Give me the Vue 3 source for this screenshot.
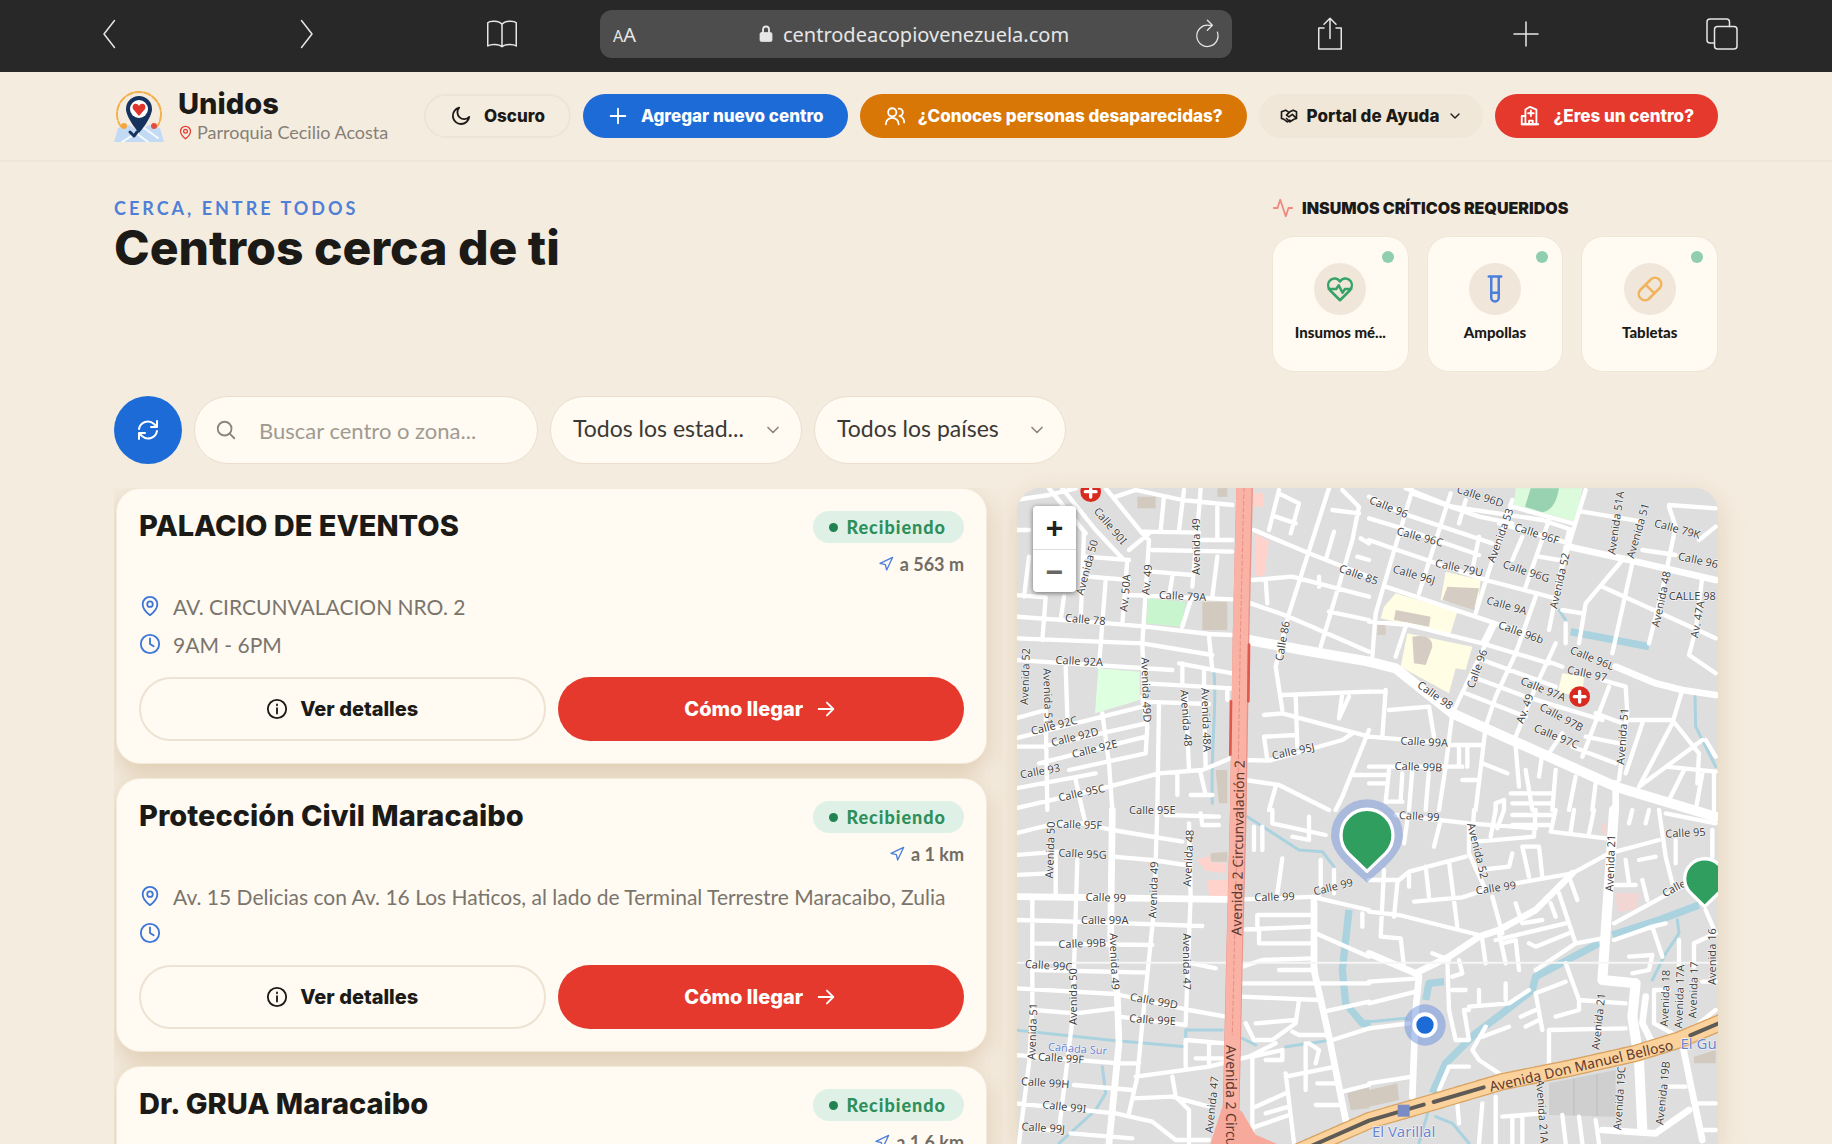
<script setup>
import { ref } from 'vue'

const icons = {
  back: '<path d="M15 3 8 12l7 9"/>',
  forward: '<path d="m9 3 7 9-7 9"/>',
  book: '<path d="M12 5.500C10 3 4 3 2.500 4.500V20c2-1.500 7.500-1.500 9.500.5 2-2 7.500-2 9.500-.5V4.500C20 3 14 3 12 5.500v15"/>',
  lock: '<rect x="4" y="10" width="16" height="12" rx="2" fill="currentColor"/><path d="M8 10V6a4 4 0 0 1 8 0v4" stroke-width="2.500"/>',
  reload: '<path d="M19.500 10.500A8.500 8.500 0 1 1 12 5h3M11.500 1 15.500 5l-4 4"/>',
  share: '<path d="M8 8H4.500v14h15V8H16M12 15V1.500M8 5.500l4-4 4 4"/>',
  plus: '<path d="M12 4v16M4 12h16"/>',
  tabs: '<rect x="7" y="7" width="15" height="15" rx="2"/><path d="M7 18H4a2 2 0 0 1-2-2V4a2 2 0 0 1 2-2h11a2 2 0 0 1 2 2v3"/>',
  moon: '<path d="M10 3a7 7 0 0 0 11 10A9 9 0 1 1 10 3z"/>',
  users: '<circle cx="9" cy="8" r="4.500"/><path d="M2 21a7 7 0 0 1 14 0M16 4a4 4 0 0 1 1 8c3 1 5 3 5 7"/>',
  hands: '<path d="M11 7 8 5 3 7v8l3 1 4 3 3-2M13 7l4-2 4 2v8l-3 1-5 3-4-4M13 7l-4 4 3 2 4-3 4 4"/>',
  chevron: '<path d="m6 9 6 6 6-6"/>',
  hospital: '<path d="M7 21H3v-9h4M7 21V5l5-3 7 3v16zM11 21v-4h4v4M13 6v6M10 9h6"/><path d="M3 21h18"/>',
  pulse: '<path d="M2 12h4l3-9 6 18 3-9h4"/>',
  heart: '<path d="M12 21 4 13C-1 6 8 0 12 6c4-6 13 0 8 7zM3 12h6l2-3 3 6 2-3h5"/>',
  tube: '<path d="M7 2h10M9 2v17a3 3 0 0 0 6 0V2M9 15h6v4a3 3 0 0 1-6 0z"/>',
  pill: '<path d="m11 20 9-9a5 5 0 0 0-7-7l-9 9a5 5 0 0 0 7 7zM8.500 8.500l7 7"/>',
  refresh: '<path d="M3 11a9 9 0 0 1 15-5l3 3M21 3v6h-6M21 13a9 9 0 0 1-15 5l-3-3M3 21v-6h6"/>',
  search: '<circle cx="10.500" cy="10.500" r="7.500"/><path d="m16 16 5 5"/>',
  pin: '<path d="M12 22s-8-6-8-12a8 8 0 0 1 16 0c0 6-8 12-8 12z"/><circle cx="12" cy="10" r="3"/>',
  clock: '<circle cx="12" cy="12" r="10"/><path d="M12 6v6l4 2.500"/>',
  info: '<circle cx="12" cy="12" r="10"/><path d="M12 11v6M12 7v1"/>',
  arrow: '<path d="M4 12h16M13 5l7 7-7 7"/>',
  nav: '<path d="m3 11 19-9-9 19-2-8z"/>',
}

const search = ref('')
const state = ref('all')
const country = ref('all')

const supplies = [
  { name: 'Insumos mé...', icon: 'heart', tone: 'green' },
  { name: 'Ampollas', icon: 'tube', tone: 'blue' },
  { name: 'Tabletas', icon: 'pill', tone: 'amber' },
]

const centers = [
  { name: 'PALACIO DE EVENTOS', distance: 'a 563 m', address: 'AV. CIRCUNVALACION NRO. 2', hours: '9AM - 6PM' },
  { name: 'Protección Civil Maracaibo', distance: 'a 1 km', address: 'Av. 15 Delicias con Av. 16 Los Haticos, al lado de Terminal Terrestre Maracaibo, Zulia', hours: '' },
  { name: 'Dr. GRUA Maracaibo', distance: 'a 1.6 km', address: '', hours: '' },
]

// The map is drawn in four tiles; every coordinate is local to its tile.
const tiles = [
  {
    x: -24, y: -24,
    areas: [
      { c: '#c8f5cd', d: 'M418 355 530 365 518 440 410 430z' },
      { c: '#deffe0', d: 'M268 565 392 575V660L258 700z' },
      { c: '#d2c9bf', d: 'M580 365H655V450H580zM385 50H440V85H385zM625 25H655V50H625zM620 870H655V970H630z' },
      { c: '#ffd3cc', d: 'M740 160 780 185 765 290 738 285zM735 40H765V80H735z' },
    ],
    minor: 'M20 60 120 45 200 25M20 345 110 352 100 480M20 410 300 430 410 440 600 462 670 465M20 475 400 490 610 525M290 300 270 560M20 540 490 570M170 560 175 710M160 25 260 150 340 235M290 25 400 160 420 180 400 490 405 640M120 25 230 160M320 50 380 30 520 60 670 75M465 50 455 150M525 30 510 150M575 25 565 150 550 320M400 155 570 158M430 210 670 215M570 180H670M430 275 550 285M625 80V180M625 230 610 350M360 345 670 358M355 240 340 430M240 290 360 300M230 230 360 240M360 210 420 160M225 160 215 420M165 350 155 420M60 230 45 350M20 150H60M600 470 610 570M545 360 520 440M490 290 480 350M510 550 670 580M520 550V610M585 570V620M410 610 670 625M20 715 110 690M20 775 400 680M20 800H100L410 730M90 850 410 770M20 925 260 880M20 985 300 920 450 880 580 870 665 835M400 650 415 740 410 820 180 870M110 690 115 990M280 700 300 850 310 990M450 670 445 990M530 640 540 870M585 640 590 860M400 665 600 672M505 880V945M575 880 590 945M545 945H610M200 900 220 990M735 150 900 220 1080 290M810 30 780 150M810 40 870 70 845 160M800 110 860 130M960 25 840 400 800 560 820 690M730 300 850 290 1080 350M770 300 775 370M725 370 840 410 1080 515M1000 30 1050 80 1030 180 935 500M970 90 1050 100M975 155 950 240M930 290V320M1045 230 1080 240M1055 175 1080 190M960 395 1080 420M820 645 1080 635M765 705 820 700 1080 770M860 650 865 800M860 765 765 770 775 840M705 840 780 842 1000 780 1030 760M1000 640 990 715 1020 650M1080 750 1000 950 980 990M710 900 810 915 960 990M800 920 780 990M1030 885H1080M655 630V660',
    major: 'M720 480 880 510 1080 545',
    water: 'M615 580C625 680 605 780 610 970',
    river: '',
    labels: [
      [295, 145, 50, 'Calle 90I'], [245, 265, -75, 'Avenida 50'], [228, 430, 5, 'Calle 78'], [210, 555, 3, 'Calle 92A'],
      [572, 200, -90, 'Avenida 49'], [360, 340, -85, 'Av. 50A'], [425, 300, -85, 'Av. 49'], [520, 360, 3, 'Calle 79A'],
      [60, 590, -88, 'Avenida 52'], [105, 650, 88, 'Avenida 51'], [400, 630, 88, 'Avenida 49D'], [520, 715, 86, 'Avenida 48'],
      [580, 720, 88, 'Avenida 48A'], [138, 748, -14, 'Calle 92C'], [200, 782, -14, 'Calle 92D'], [260, 818, -14, 'Calle 92E'],
      [95, 885, -10, 'Calle 93'], [220, 950, -12, 'Calle 95C'], [832, 485, -80, 'Calle 86'], [855, 825, -12, 'Calle 95J'],
      [1045, 295, 20, 'Calle 85'],
    ],
  },
  {
    x: 1056, y: -24,
    areas: [
      { c: '#dcfbdc', d: 'M440 25H640L620 125 435 75z' },
      { c: '#98d2b0', d: 'M485 25H570Q560 90 520 97L468 80z' },
      { c: '#fffde3', d: 'M230 275 335 300 325 385 215 360zM80 340 265 395 245 460 180 450 35 415 45 380zM115 460 310 500 290 570 260 565 240 640 95 560zM580 580 645 590 640 645 565 640z' },
      { c: '#d5ccc3', d: 'M235 320 330 325 315 390 220 360zM80 390 185 410 180 440 75 420zM130 470Q190 460 190 500L170 555 135 550zM25 435H50V465H25z' },
    ],
    minor: 'M110 25 250 80M130 40 330 110 430 130M250 80 520 120 610 150M430 80 610 130M0 50 100 100 370 190M0 115 100 145 330 225M0 180 70 205 350 300 560 355M50 320 200 370 380 430 480 460M390 130 600 190M0 425 120 435 340 490 540 550M340 540 560 620M310 590 470 650 700 720M290 640 470 710M370 430 340 490M130 30 70 230 20 400 10 530M245 40 150 340M290 60 270 130M330 170 310 270M430 60 370 240 320 400M460 170 430 240M540 120 470 320M600 150 560 350 540 450M650 30 610 160 580 260M500 350 440 520 380 650 350 740M380 430 250 700M560 490 500 620 440 770M110 440 80 530M510 230 570 240M640 95 820 125M760 240 650 370 630 490M790 250 730 520M700 320 1040 475M900 75 1040 85M900 80 920 140 880 330 840 490M820 210 920 225M1000 290 980 450 960 525 1040 580M990 180 1040 140M580 390 640 400M590 430V490M540 545 580 560M940 630 910 730 810 920M770 720H910L990 820 985 910M700 600 770 620 775 700 750 900M820 730 770 880M720 620 640 830M680 700 760 730M650 770 750 790M610 800 740 850M580 760 540 820M1000 780 810 920M1010 780 1040 830M890 860 1040 875M945 870 900 960M1000 880 980 990M1035 880V990M0 635H45M50 630 40 770M60 690 180 680 195 770M0 770 240 790M250 700 230 860 210 990M240 795H340M350 740 320 990M340 850 415 880M280 900H330M270 800V860M295 800V860M0 860H280M0 885H50M0 910H50M60 870 50 965H100M130 870 120 990M180 870 170 990M100 880 95 960M440 800 450 920M470 870 490 990M520 820 510 890M425 940H550M430 970H550M560 870 550 990M620 890 600 990M680 910 670 990M380 990V970L405 960V990',
    major: 'M0 545 80 565 250 700 450 790 740 920 1040 1010',
    mid: 'M600 200 780 240 1040 300M740 560 860 610 940 630 1040 645M740 910V990',
    water: 'M570 390 590 420M978 645 980 740 1040 860',
    river: 'M605 455 840 500',
    labels: [
      [55, 92, 22, 'Calle 96'], [150, 182, 15, 'Calle 96C'], [330, 60, 18, 'Calle 96D'], [268, 275, 12, 'Calle 79U'],
      [132, 295, 16, 'Calle 96J'], [500, 172, 18, 'Calle 96F'], [405, 170, -70, 'Avenida 53'], [468, 285, 18, 'Calle 96G'],
      [410, 388, 16, 'Calle 9A'], [452, 468, 20, 'Calle 96b'], [583, 305, -77, 'Avenida 52'], [752, 130, -82, 'Avenida 51A'],
      [818, 155, -74, 'Avenida 51'], [922, 158, 15, 'Calle 79K'], [985, 252, 12, 'Calle 96'], [970, 360, 0, 'CALLE 98'],
      [888, 360, -78, 'Avenida 48'], [997, 420, -80, 'Av. 47A'], [665, 545, 22, 'Calle 96L'], [652, 592, 12, 'Calle 97'],
      [335, 570, -70, 'Calle 96'], [192, 655, 35, 'Calle 98'], [518, 638, 22, 'Calle 97A'], [572, 722, 28, 'Calle 97B'],
      [558, 780, 22, 'Calle 97C'], [478, 690, -70, 'Av. 49'], [165, 797, 3, 'Calle 99A'], [148, 872, 2, 'Calle 99B'],
      [772, 770, -86, 'Avenida 51'],
    ],
  },
  {
    x: -24, y: 966,
    areas: [
      { c: '#d2c9bf', d: 'M605 130 655 125V155H605zM1015 850 1080 830V895L1025 900z' },
      { c: '#ffd3cc', d: 'M565 150 600 138 610 158H650V190L590 182zM595 210H655V260H600z' },
    ],
    minor: 'M20 70 120 45 220 40 310 60 520 95M220 0 230 40M20 135 150 125M20 195 120 190M140 130V250M205 150 190 630 150 960M445 0 435 300 400 640 385 800 360 910M310 140 430 150 530 165M540 40 545 260 530 640M20 330 200 335 580 348M70 270V600L60 760 30 1000M75 400 430 405M80 480 415 488M20 535 320 552 540 600 650 620M75 600 200 610 320 595M330 620 530 645M20 735 330 760H390M380 800 600 770 720 740 800 700M195 825 370 840M370 865 490 860 600 890M490 800 500 860 540 900V1000M20 880 320 910 430 935 500 990H600M90 960H150M185 970 370 985M650 700 530 690V770M600 700V760M560 745H640M470 15 630 20M575 10 580 45H630M550 460 620 475M700 268 930 260M820 145 805 250M935 150V230M975 180V250M790 0V40L950 75M850 80 900 90V20M930 265 1080 300M910 315H745V350M710 358 910 350M750 360V400H910M920 370 1080 440M700 470 760 450 910 445M810 480H920M700 520H1080M700 560 930 570M945 605 1080 575M870 570 860 640 790 690H735L710 640M740 640 860 630M850 665 870 675H950M970 690 1080 655M730 980V740L820 720V750H770M890 700V840M830 800 980 770M830 790 855 1000M740 890 830 850M770 910 840 890M740 950 840 915M920 885H990M1000 845 1080 825M925 820H980M1060 310V350M735 50V120M760 50V120M900 700 930 720 920 760',
    mid: 'M310 0 305 380 325 560 330 700 300 1000M20 260 650 268M915 270V480L960 680 1010 930',
    major: '',
    water: 'M715 20 870 120 940 125 975 170M20 660 300 690 530 710V660H640M700 685 740 705M830 710 970 690M280 770 290 850 260 900 150 1000',
    river: 'M1020 300 1000 480 1010 580 1060 640H1085',
    labels: [
      [210, 55, 2, 'Calle 95F'], [430, 12, 0, 'Calle 95E'], [220, 143, 3, 'Calle 95G'], [290, 274, 2, 'Calle 99'],
      [135, 120, -88, 'Avenida 50'], [445, 240, -88, 'Avenida 49'], [550, 145, -87, 'Avenida 48'], [287, 343, 0, 'Calle 99A'],
      [220, 412, -2, 'Calle 99B'], [118, 478, 4, 'Calle 99C'], [305, 455, 88, 'Avenida 49'], [522, 455, 90, 'Avenida 47'],
      [205, 560, -90, 'Avenida 50'], [433, 584, 10, 'Calle 99D'], [430, 641, 4, 'Calle 99E'], [82, 665, -88, 'Avenida 51'],
      [155, 756, 4, 'Calle 99F'], [108, 830, 4, 'Calle 99H'], [165, 902, 6, 'Calle 99I'], [102, 965, 4, 'Calle 99J'],
      [620, 885, -84, 'Avenida 47'], [797, 272, -2, 'Calle 99'], [975, 242, -14, 'Calle 99'],
    ],
  },
  {
    x: 1056, y: 966,
    areas: [
      { c: '#cfcfcf', d: 'M540 820 740 780V920L540 915z' },
      { c: '#c4c4c4', d: 'M612 806H617V916H612zM682 792H687V918H682z' },
      { c: '#f2d6d3', d: 'M740 250H812L800 300 745 305zM697 40H712V75H697z' },
      { c: '#d2c9bf', d: 'M0 840 85 820 90 870 0 890zM975 740 1040 720V760H975z' },
    ],
    minor: 'M80 15 300 40 500 55M115 30 105 100M215 30 195 110M315 0 310 90M380 0 365 80M405 0 385 55M500 0 495 80 320 95M430 15H550M430 45H540M560 0 545 65 710 85M615 0 605 65M675 0 660 70M0 210H90L120 185 290 140M45 180 35 380 95 385 105 470M85 220 75 320M120 190V230M170 170 180 260M240 155 265 350M135 275 280 262 350 240M300 40V130L350 240M440 220 610 190 720 130 870 90M0 305 90 315 330 375M340 390 350 460M370 260 400 370M390 370 410 460M440 280 460 340 520 330M570 250 620 400 500 480M600 200 625 270M545 280 560 320M380 390 590 340M400 400 440 390 450 480M480 400 500 410 600 370M480 200 460 110H510L520 200M330 180 420 170 430 130M190 430 240 450M270 450 280 490 250 500M300 590 420 580 480 540M235 450 240 600 260 690H300L285 600H300M250 540H290M330 540V580M410 520V570M0 515 150 505M0 580 140 545M0 655 120 640M0 820 130 800M620 400 700 385M735 390 850 350 890 340M735 340 900 250 940 230M850 350 880 440M770 150 780 220M740 225H800M820 210 835 270M810 150 860 140M870 0 890 140 910 220M780 40 790 0M830 40 840 0M890 10 1040 40M920 90V160M1030 60V140M590 460 630 570 770 580M500 550 590 515M500 550 520 660M455 620 500 600M470 650 510 630M540 770V660L770 655M630 570V600L560 620M350 650 310 720 330 750 390 790M340 680 420 650M210 840 240 770H300M855 640V540H900M855 640 910 670M930 390V470M1010 300 1040 370 975 400V470M780 440 850 435 840 480 790 490M1000 515H1040M990 640 1040 600M900 830H950M980 880H1040M340 880 330 1000M380 860V1000M400 920 520 910M430 920V1000M460 920V1000M580 915 590 1000M630 920 640 1000M680 930 690 1000M265 880 270 940M1000 960H1040',
    mid: 'M610 190 500 300 390 360 330 380 240 440 140 490 0 430M150 500 140 600 130 860M830 560 820 640 850 700M700 960 860 970 960 900M940 700 960 800 1000 990',
    major: 'M735 0 700 510 800 520 790 620 810 750 820 960',
    water: 'M925 330 930 370 890 430 850 510M0 635 110 625M190 860 150 1000M200 920 250 940 300 1000',
    river: 'M990 285 870 330 730 375M690 400 500 500 490 540 400 610 320 670 230 760 190 850M170 570 180 520 225 515',
    labels: [
      [150, 30, 3, 'Calle 99'], [315, 125, 76, 'Avenida 52'], [382, 245, -8, 'Calle 99'], [736, 160, -88, 'Avenida 21'],
      [700, 635, -84, 'Avenida 21'], [950, 80, -3, 'Calle 95'], [920, 245, -28, 'Calle'], [900, 565, -88, 'Avenida 18'],
      [943, 560, -88, 'Avenida 17A'], [985, 540, -88, 'Avenida 17'], [1042, 440, -90, 'Avenida 16'], [508, 905, 86, 'Avenida 21A'],
      [763, 865, -86, 'Avenida 19C'], [893, 850, -84, 'Avenida 19B'],
    ],
  },
]
</script>

<template>
  <div class="page">
    <nav class="browser">
      <div class="tools">
        <button aria-label="Atrás"><svg viewBox="0 0 24 24" v-html="icons.back" /></button>
        <button aria-label="Adelante"><svg viewBox="0 0 24 24" v-html="icons.forward" /></button>
        <button aria-label="Marcadores"><svg viewBox="0 0 24 24" v-html="icons.book" /></button>
      </div>
      <div class="address">
        <span class="reader"><small>A</small>A</span>
        <span class="url"><svg viewBox="0 0 24 24" v-html="icons.lock" />centrodeacopiovenezuela.com</span>
        <button aria-label="Recargar"><svg viewBox="0 0 24 24" v-html="icons.reload" /></button>
      </div>
      <div class="tools">
        <button aria-label="Compartir"><svg viewBox="0 0 24 24" v-html="icons.share" /></button>
        <button aria-label="Nueva pestaña"><svg viewBox="0 0 24 24" v-html="icons.plus" /></button>
        <button aria-label="Pestañas"><svg viewBox="0 0 24 24" v-html="icons.tabs" /></button>
      </div>
    </nav>

    <header class="top">
      <div class="inner">
        <a class="brand" href="#">
          <svg class="logo" viewBox="0 0 50 52">
            <circle cx="25" cy="24" r="22" fill="none" stroke="#f3b04c" stroke-width="2" stroke-dasharray="7 2" />
            <path d="M4 38 15 35 25 41 35 35 46 38 50 52H0z" fill="#c3daf5" />
            <path d="M8 52 22 43 34 52M30 38 44 48" stroke="#f7fbff" stroke-width="2" fill="none" />
            <path d="M25 43S12 28 12 19a13 13 0 0 1 26 0C38 28 25 43 25 43z" fill="#16335e" />
            <circle cx="25" cy="19" r="9" fill="#fff" />
            <path d="m25 26-6-7c-2-5 4-7 6-3 2-4 8-2 6 3z" fill="#e0352b" />
            <circle cx="10" cy="36" r="3" fill="#f3a63c" />
            <circle cx="40" cy="36" r="3" fill="#e34b40" />
            <path d="M16 42 20 46 23 42" stroke="#16335e" stroke-width="3" fill="none" />
          </svg>
          <span class="brand-text">
            <strong>Unidos</strong>
            <span class="parish"><svg viewBox="0 0 24 24" v-html="icons.pin" />Parroquia Cecilio Acosta</span>
          </span>
        </a>
        <div class="actions">
          <button class="pill outline"><svg viewBox="0 0 24 24" v-html="icons.moon" />Oscuro</button>
          <button class="pill blue"><svg viewBox="0 0 24 24" v-html="icons.plus" />Agregar nuevo centro</button>
          <button class="pill orange"><svg viewBox="0 0 24 24" v-html="icons.users" />¿Conoces personas desaparecidas?</button>
          <button class="pill sand"><svg viewBox="0 0 24 24" v-html="icons.hands" />Portal de Ayuda<svg class="caret" viewBox="0 0 24 24" v-html="icons.chevron" /></button>
          <button class="pill red"><svg viewBox="0 0 24 24" v-html="icons.hospital" />¿Eres un centro?</button>
        </div>
      </div>
    </header>

    <main class="content">
      <section class="intro">
        <div>
          <p class="eyebrow">CERCA, ENTRE TODOS</p>
          <h1>Centros cerca de ti</h1>
        </div>
        <div class="supplies">
          <h2><svg viewBox="0 0 24 24" v-html="icons.pulse" />INSUMOS CRÍTICOS REQUERIDOS</h2>
          <div class="supply-row">
            <button v-for="s in supplies" :key="s.name" class="supply">
              <i class="dot"></i>
              <span class="disc" :class="s.tone"><svg viewBox="0 0 24 24" v-html="icons[s.icon]" /></span>
              <span>{{ s.name }}</span>
            </button>
          </div>
        </div>
      </section>

      <section class="filters">
        <button class="refresh" aria-label="Actualizar"><svg viewBox="0 0 24 24" v-html="icons.refresh" /></button>
        <label class="field search">
          <svg viewBox="0 0 24 24" v-html="icons.search" />
          <input v-model="search" type="text" placeholder="Buscar centro o zona..." aria-label="Buscar centro o zona">
        </label>
        <label class="field select">
          <select v-model="state" aria-label="Estado"><option value="all">Todos los estad...</option></select>
          <svg viewBox="0 0 24 24" v-html="icons.chevron" />
        </label>
        <label class="field select">
          <select v-model="country" aria-label="País"><option value="all">Todos los países</option></select>
          <svg viewBox="0 0 24 24" v-html="icons.chevron" />
        </label>
      </section>

      <section class="results">
        <div class="list">
          <article v-for="c in centers" :key="c.name" class="card">
            <div class="card-head">
              <h3>{{ c.name }}</h3>
              <div class="status">
                <span class="badge"><i></i>Recibiendo</span>
                <span class="distance"><svg viewBox="0 0 24 24" v-html="icons.nav" />{{ c.distance }}</span>
              </div>
            </div>
            <p class="line"><svg viewBox="0 0 24 24" v-html="icons.pin" />{{ c.address }}</p>
            <p class="line" :class="{ bare: !c.hours }"><svg viewBox="0 0 24 24" v-html="icons.clock" />{{ c.hours }}</p>
            <div class="card-actions">
              <button class="details"><svg viewBox="0 0 24 24" v-html="icons.info" />Ver detalles</button>
              <button class="go">Cómo llegar<svg viewBox="0 0 24 24" v-html="icons.arrow" /></button>
            </div>
          </article>
        </div>

        <div class="map">
          <svg class="canvas" viewBox="0 0 2103 1968" preserveAspectRatio="xMinYMin slice">
            <rect width="2103" height="1968" fill="#dedede" />
            <g v-for="(t, i) in tiles" :key="i" :transform="`translate(${t.x} ${t.y})`">
              <path v-for="(a, k) in t.areas" :key="k" :d="a.d" :fill="a.c" />
              <path class="water" :d="t.water" />
              <path class="river" :d="t.river" />
            </g>
            <g v-for="(t, i) in tiles" :key="'r' + i" :transform="`translate(${t.x} ${t.y})`">
              <path class="road" :d="t.minor" />
              <path class="road mid" :d="t.mid" />
              <path class="road major" :d="t.major" />
            </g>
            <path d="M0 1424H2103" stroke="#f6f6f6" stroke-width="6" />
            <path class="highway-edge" d="M683 0 672 450 664 966 652 1430 640 1968" />
            <path class="highway" d="M681 0 670 450 662 966 651 1430 640 1968" />
            <path d="M681 0 670 450 662 966 651 1430 646 1640" fill="none" stroke="#e88f84" stroke-width="3" stroke-dasharray="12 8" />
            <path d="M696 470 694 640M642 640 640 800" stroke="#e2574c" stroke-width="8" />
            <path d="M618 1850 580 1968H780L716 1940 674 1870z" fill="#f7a99b" />
            <path d="M846 1990 1056 1898 1236 1846 1456 1781 1656 1741 1856 1696 1986 1656 2110 1604" fill="none" stroke="#d9a362" stroke-width="52" stroke-dasharray="16 6" />
            <path d="M846 1990 1056 1898 1236 1846 1456 1781 1656 1741 1856 1696 1986 1656 2110 1604" fill="none" stroke="#fbd29c" stroke-width="44" />
            <path d="M860 1984 1056 1898 1220 1850M1250 1842 1400 1798M2020 1642 2110 1604" fill="none" stroke="#5e5b56" stroke-width="12" />
            <rect x="1142" y="1850" width="36" height="36" fill="#7b8cc4" />
            <g v-for="(t, i) in tiles" :key="'l' + i" :transform="`translate(${t.x} ${t.y})`">
              <text v-for="(l, k) in t.labels" :key="k" class="street" :transform="`translate(${l[0]} ${l[1]}) rotate(${l[2]})`">{{ l[3] }}</text>
            </g>
            <text class="avenue" transform="translate(678 1080) rotate(-89)">Avenida 2 Circunvalación 2</text>
            <text class="avenue" transform="translate(628 1864) rotate(90)">Avenida 2 Circunval</text>
            <text class="avenue" transform="translate(1696 1748) rotate(-13)">Avenida Don Manuel Belloso</text>
            <text class="place" transform="translate(181 1694) rotate(4)">Cañada Sur</text>
            <text class="place station" x="1160" y="1946">El Varillal</text>
            <text class="place station" x="2045" y="1684">El Gu</text>
            <g v-for="[x, y] in [[221, 11], [1688, 626]]" :key="x" :transform="`translate(${x} ${y})`">
              <circle r="31" fill="#d92a20" />
              <path d="M0-16V16M-16 0H16" stroke="#fff" stroke-width="10" />
            </g>
            <path d="M1050 1184C1000 1140 942 1096 942 1042A108 108 0 0 1 1158 1042C1158 1096 1100 1140 1050 1184z" fill="#5c84dc" fill-opacity=".4" />
            <path class="marker" d="M1050 1150 994 1096A78 78 0 1 1 1106 1096z" />
            <path class="marker" d="M2063 1256 2018 1212A60 60 0 1 1 2108 1212z" />
            <circle cx="1224" cy="1611" r="62" fill="#5c84dc" fill-opacity=".45" />
            <circle cx="1224" cy="1611" r="32" fill="#1d6bd6" stroke="#fff" stroke-width="12" />
          </svg>
          <div class="zoom">
            <button aria-label="Acercar">+</button>
            <button aria-label="Alejar">−</button>
          </div>
        </div>
      </section>
    </main>
  </div>
</template>

<style>
body { margin: 0; background: #f5ece0; }
</style>

<style scoped>
* { box-sizing: border-box; }
.page { height: 100vh; display: flex; flex-direction: column; overflow: hidden; background: #f5ece0; color: #1b1a17; font-family: Lato, sans-serif; }
button { font: inherit; color: inherit; border: 0; background: none; padding: 0; cursor: pointer; }
svg { flex: none; fill: none; stroke: currentColor; stroke-width: 2; stroke-linecap: round; stroke-linejoin: round; }
h1, h2, h3, p { margin: 0; }

.browser { flex: none; height: 72px; padding: 0 92px 4px; display: flex; align-items: center; gap: 80px; background: #282828; color: #e6e6e6; }
.tools { flex: 1; display: flex; justify-content: space-between; }
.browser button { width: 36px; display: flex; justify-content: center; }
.browser svg { width: 36px; height: 36px; stroke-width: 1; }
.address { width: 632px; height: 48px; padding: 0 6px 0 13px; border-radius: 12px; background: #4d4d4d; display: flex; align-items: center; justify-content: space-between; }
.address button svg { width: 30px; height: 30px; }
.reader { font: 20px "Noto Sans", sans-serif; }
.reader small { font-size: 16px; }
.url { display: flex; align-items: center; gap: 8px; font: 20px "Noto Sans", sans-serif; }
.browser .url svg { width: 18px; height: 20px; }

.top { flex: none; height: 90px; border-bottom: 2px solid #f0e7d9; }
.inner { max-width: 1604px; height: 100%; margin: 0 auto; display: flex; align-items: center; justify-content: space-between; }
.brand { display: flex; align-items: center; gap: 14px; color: inherit; text-decoration: none; }
.logo { width: 50px; height: 52px; stroke: none; }
.brand-text { display: flex; flex-direction: column; }
.brand strong { font: 800 29px/32px Inter, sans-serif; }
.parish { display: flex; align-items: center; gap: 4px; font-size: 18px; line-height: 24px; color: #858077; }
.parish svg { width: 15px; height: 15px; color: #e4392c; }
.actions { display: flex; gap: 12px; }
.pill { height: 44px; padding: 0 24px; border-radius: 22px; display: flex; align-items: center; gap: 12px; font: 800 17px Inter, sans-serif; white-space: nowrap; }
.pill svg { width: 22px; height: 22px; }
.outline { border: 2px solid #eee4d5; }
.blue { background: #1d6bd6; color: #fff; }
.orange { background: #d97706; color: #fff; }
.sand { background: #f0e7d9; padding: 0 20px; gap: 8px; }
.sand svg { width: 20px; height: 20px; }
.pill .caret { width: 16px; height: 16px; }
.red { background: #e4392c; color: #fff; }

.content { flex: 1; min-height: 0; width: 100%; max-width: 1604px; margin: 0 auto; padding-top: 34px; display: flex; flex-direction: column; }
.intro { display: flex; justify-content: space-between; height: 176px; }
.eyebrow { font-size: 18px; line-height: 24px; font-weight: 700; letter-spacing: 3px; color: #4f7fd6; }
h1 { font: 800 48px/56px Inter, sans-serif; }
.supplies { width: 446px; }
h2 { display: flex; align-items: center; gap: 8px; height: 24px; font: 900 16px Inter, sans-serif; }
h2 svg { width: 22px; height: 22px; color: #f08a80; }
.supply-row { display: flex; gap: 18px; margin-top: 16px; }
.supply { position: relative; flex: 1; height: 136px; border: 1px solid #f0e6d7; border-radius: 22px; background: #fffaf2; display: flex; flex-direction: column; align-items: center; padding-top: 26px; gap: 8px; font-size: 15px; line-height: 18px; font-weight: 900; }
.disc { width: 52px; height: 52px; border-radius: 50%; background: #f0e6d9; display: grid; place-items: center; }
.disc svg { width: 30px; height: 30px; }
.disc.green { color: #35a268; }
.disc.blue { color: #4a7fdc; background: #f0e6d9; }
.disc.amber { color: #f0b35e; }
.dot { position: absolute; top: 14px; right: 14px; width: 12px; height: 12px; border-radius: 50%; background: #8fcfae; }

.filters { flex: none; display: flex; gap: 12px; margin-top: 24px; }
.refresh { width: 68px; height: 68px; border-radius: 50%; background: #1d6bd6; color: #fff; display: grid; place-items: center; }
.refresh svg { width: 24px; height: 24px; }
.field { height: 68px; border: 1px solid #eadfce; border-radius: 34px; background: #fffaf2; display: flex; align-items: center; }
.search { width: 344px; padding: 0 20px; gap: 20px; }
.field svg { width: 22px; height: 22px; color: #8b867c; }
.field input { flex: 1; min-width: 0; border: 0; outline: 0; padding: 0 2px; background: none; font: 22px Lato, sans-serif; color: #1b1a17; }
.field input::placeholder { color: #a09b91; opacity: 1; }
.select { width: 252px; padding: 0 18px 0 22px; }
.select svg { width: 20px; height: 20px; }
.select select { appearance: none; flex: 1; min-width: 0; border: 0; outline: 0; padding: 0 0 4px; background: none; font: 23px Lato, sans-serif; color: #3b3935; }

.results { flex: 1; min-height: 0; margin-top: 24px; display: grid; grid-template-columns: minmax(0, 873fr) minmax(0, 701fr); gap: 30px; }
.list { min-height: 0; overflow: hidden; padding-left: 2px; margin-right: -16px; padding-right: 16px; display: flex; flex-direction: column; gap: 14px; }
.card { flex: none; padding: 22px; border: 1px solid #f3eadb; border-radius: 24px; background: #fffaf2; box-shadow: 0 8px 24px rgba(170, 135, 70, .32); }
.card-head { display: flex; justify-content: space-between; height: 76px; }
h3 { font: 800 29px/30px Inter, sans-serif; }
.status { display: flex; flex-direction: column; align-items: flex-end; gap: 8px; }
.badge { height: 32px; padding: 0 18px 0 16px; border-radius: 16px; background: #dff1e7; color: #2e8f5a; display: flex; align-items: center; gap: 8px; font-size: 18px; font-weight: 900; letter-spacing: 1px; }
.badge i { width: 9px; height: 9px; border-radius: 50%; background: #238350; }
.distance { display: flex; align-items: center; gap: 6px; font-size: 18px; line-height: 26px; font-weight: 700; color: #716d65; }
.distance svg { width: 16px; height: 16px; color: #4a7fdc; }
.line { display: flex; align-items: center; gap: 12px; height: 38px; font-size: 21px; color: #7a756c; white-space: nowrap; }
.line.bare { height: 36px; }
.line svg { width: 22px; height: 22px; color: #3e76d8; }
.card-actions { display: grid; grid-template-columns: 1fr 1fr; gap: 12px; margin-top: 14px; }
.card-actions button { height: 64px; border-radius: 32px; display: flex; align-items: center; justify-content: center; gap: 12px; font: 800 20px Inter, sans-serif; }
.card-actions svg { width: 22px; height: 22px; }
.details { border: 2px solid #ece3d3; }
.card-actions .go { background: #e4392c; color: #fff; }

.map { position: relative; min-height: 0; overflow: hidden; border-radius: 24px 24px 0 0; background: #dedede; box-shadow: 0 8px 28px rgba(170, 135, 70, .26); }
.canvas { position: absolute; inset: 0; width: 100%; height: 100%; stroke: none; }
.road { fill: none; stroke: #fff; stroke-width: 13; }
.road.mid { stroke-width: 20; }
.road.major { stroke-width: 30; }
.water, .river { fill: none; stroke: #aad3df; stroke-width: 9; }
.river { stroke-width: 22; stroke-linecap: butt; }
.highway { fill: none; stroke: #f9b2a4; stroke-width: 46; }
.highway-edge { fill: none; stroke: #e9928a; stroke-width: 50; }
.street, .avenue, .place { font-family: "Noto Sans", sans-serif; font-size: 33px; text-anchor: middle; fill: #444; stroke: #fff; stroke-width: 3; paint-order: stroke; }
.avenue { font-size: 42px; fill: #5e3a30; stroke: none; }
.place { fill: #6884cf; }
.station { font-size: 45px; }
.marker { fill: #2f9e5e; stroke: #fff; stroke-width: 10; }
.zoom { position: absolute; top: 18px; left: 16px; width: 43px; border-radius: 4px; background: #fff; box-shadow: 0 1px 5px rgba(0, 0, 0, .5); }
.zoom button { display: block; width: 100%; height: 43px; font: 700 30px/43px "Liberation Sans", sans-serif; color: #222; }
.zoom button + button { border-top: 1px solid #ddd; color: #666; }
</style>
